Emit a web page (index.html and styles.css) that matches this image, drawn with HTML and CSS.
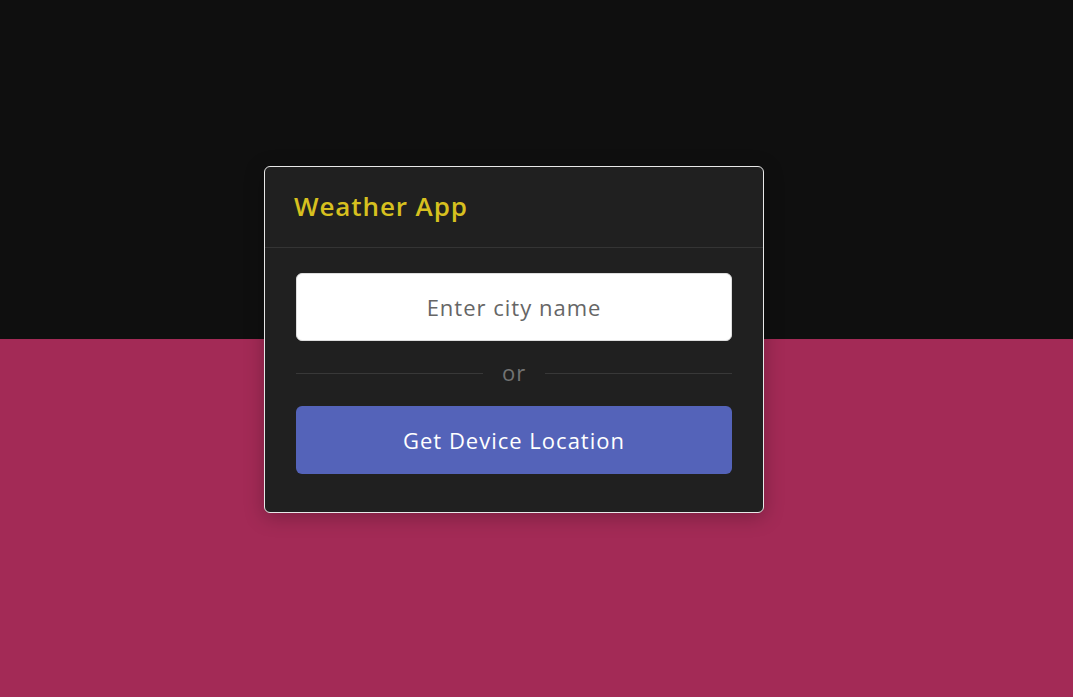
FILE: index.html
```html
<!DOCTYPE html>
<html lang="en">
<head>
<meta charset="utf-8">
<title>Weather App</title>
<link rel="stylesheet" href="styles.css">
</head>
<body>
<div class="page">
  <div class="card">
    <header class="card-header">
      <h1 class="title">Weather App</h1>
    </header>
    <div class="card-body">
      <input class="city-input" type="text" placeholder="Enter city name">
      <div class="divider"><span class="divider-text">or</span></div>
      <button class="location-btn" type="button">Get Device Location</button>
    </div>
  </div>
</div>
</body>
</html>
```

FILE: styles.css
```css
* { box-sizing: border-box; }
html, body { margin: 0; padding: 0; }
body {
  min-height: 697px;
  background: linear-gradient(to bottom, #0f0f0f 0, #0f0f0f 339px, #a32a56 339px, #a32a56 100%);
  font-family: "Open Sans", "Noto Sans", sans-serif;
}
.page {
  display: flex;
  padding: 166px 0 0 264px;
}
.card {
  width: 500px;
  background: #202020;
  border: 1px solid #e8e8e8;
  border-radius: 6px;
  box-shadow: 0 4px 20px rgba(0,0,0,0.25);
}
.card-header {
  height: 81px;
  display: flex;
  align-items: center;
  padding: 0 29px;
  border-bottom: 1px solid #343434;
}
.title {
  margin: 0;
  font-size: 26px;
  font-weight: 600;
  color: #d7c01f;
  letter-spacing: 0.9px;
  padding-bottom: 2px;
}
.card-body {
  padding: 25px 31px 38px 31px;
  display: flex;
  flex-direction: column;
}
.city-input {
  width: 100%;
  height: 68px;
  border: 1px solid #ddd;
  border-radius: 6px;
  background: #fff;
  text-align: center;
  font-family: inherit;
  font-size: 22px;
  letter-spacing: 1px;
  color: #333;
  outline: none;
}
.city-input::placeholder { color: #666; }
.divider {
  display: flex;
  align-items: center;
  height: 65px;
}
.divider::before, .divider::after {
  content: "";
  flex: 1;
  height: 1px;
  background: #383838;
}
.divider-text {
  padding: 0 19px;
  font-size: 22px;
  letter-spacing: 1px;
  color: #737373;
  line-height: 1;
  padding-bottom: 3px;
}
.location-btn {
  width: 100%;
  height: 68px;
  border: none;
  border-radius: 6px;
  background: #5463b9;
  color: #fff;
  font-family: inherit;
  font-size: 22px;
  letter-spacing: 1px;
  cursor: pointer;
}
```
